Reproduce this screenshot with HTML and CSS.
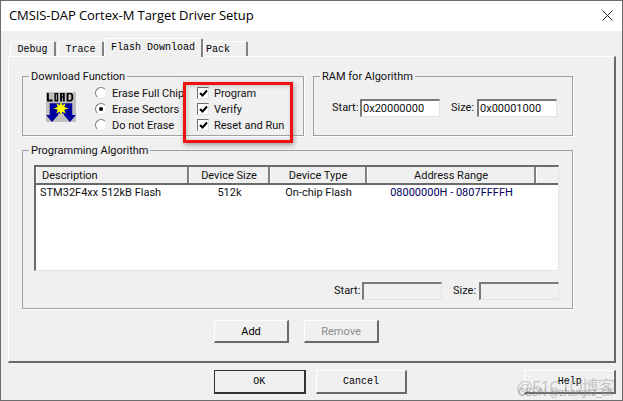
FILE: index.html
```html
<!DOCTYPE html>
<html lang="en">
<head>
  <meta charset="UTF-8">
  <title>CMSIS-DAP Cortex-M Target Driver Setup</title>
  <link rel="stylesheet" href="styles.css">
</head>
<body>
  <div class="window">
    <div class="titlebar">
      <span class="title-text">CMSIS-DAP Cortex-M Target Driver Setup</span>
      <svg class="close-icon" width="11" height="11" viewBox="0 0 11 11"><path d="M0.5 0.5L10.5 10.5M10.5 0.5L0.5 10.5" stroke="#222" fill="none"/></svg>
    </div>

    <div class="client">
      <div class="tabs">
        <div class="tab tab-debug">Debug</div>
        <div class="tab tab-trace">Trace</div>
        <div class="tab tab-active">Flash Download</div>
        <div class="tab tab-pack">Pack</div>
      </div>

      <div class="panel">
        <div class="top-row">
          <fieldset class="group group-download">
            <legend>Download Function</legend>
            <div class="download-body">
              <svg class="load-icon" width="30" height="30" viewBox="0 0 32 32">
                <rect x="0" y="0" width="32" height="32" fill="#c0c0c0"/>
                <path d="M1 10V1H3V8H7V10ZM9 1H13V10H9ZM10.500 2.500V8.500H11.500V2.500ZM15 10V1H20V10H18V6H17V10ZM17 2.500V4.500H18V2.500ZM22 1H27L29 3V8L27 10H22ZM24 2.500V8.500H26L27 7.500V3.500L26 2.500Z" fill="#000" fill-rule="evenodd"/>
                <path d="M13 12H19V23H13Z" fill="#0000a0"/>
                <path d="M4 12H13V24.500L6.500 32L0 24.500H4ZM19 12H28V24.500H32L25.500 32L19 24.500Z" fill="#0000a0"/>
                <path d="M16 10L17.500 14L21 12L19.500 16L24 17.500L19.500 19L21 23L17.500 21L16 25L14.500 21L11 23L12.500 19L8 17.500L12.500 16L11 12L14.500 14Z" fill="#ffff00"/>
              </svg>
              <div class="radios">
                <label class="opt"><span class="radio"></span>Erase Full Chip</label>
                <label class="opt"><span class="radio radio-on"></span>Erase Sectors</label>
                <label class="opt"><span class="radio"></span>Do not Erase</label>
              </div>
              <div class="checks">
                <label class="opt"><span class="check"><svg width="9" height="9" viewBox="0 0 9 9"><path d="M1 4L3.500 6.500L8 1.500" stroke="#000" stroke-width="2" fill="none"/></svg></span>Program</label>
                <label class="opt"><span class="check"><svg width="9" height="9" viewBox="0 0 9 9"><path d="M1 4L3.500 6.500L8 1.500" stroke="#000" stroke-width="2" fill="none"/></svg></span>Verify</label>
                <label class="opt"><span class="check"><svg width="9" height="9" viewBox="0 0 9 9"><path d="M1 4L3.500 6.500L8 1.500" stroke="#000" stroke-width="2" fill="none"/></svg></span>Reset and Run</label>
              </div>
            </div>
          </fieldset>

          <fieldset class="group group-ram">
            <legend>RAM for Algorithm</legend>
            <div class="ram-fields">
              <span class="field-label">Start:</span>
              <span class="input">0x20000000</span>
              <span class="field-label label-size">Size:</span>
              <span class="input">0x00001000</span>
            </div>
          </fieldset>
        </div>

        <fieldset class="group group-algo">
          <legend>Programming Algorithm</legend>
          <div class="list">
            <div class="list-head">
              <div class="col col-desc head-left">Description</div>
              <div class="col col-size">Device Size</div>
              <div class="col col-type">Device Type</div>
              <div class="col col-addr">Address Range</div>
              <div class="col col-rest"></div>
            </div>
            <div class="list-row">
              <div class="cell col-desc">STM32F4xx 512kB Flash</div>
              <div class="cell col-size">512k</div>
              <div class="cell col-type">On-chip Flash</div>
              <div class="cell col-addr addr-text">08000000H - 0807FFFFH</div>
            </div>
          </div>
          <div class="algo-fields">
            <span class="field-label">Start:</span>
            <span class="input input-off"></span>
            <span class="field-label label-size">Size:</span>
            <span class="input input-off"></span>
          </div>
        </fieldset>

        <div class="algo-buttons">
          <button class="btn btn-small">Add</button>
          <button class="btn btn-small btn-off">Remove</button>
        </div>
      </div>

      <div class="footer">
        <button class="btn btn-main btn-default">OK</button>
        <button class="btn btn-main">Cancel</button>
        <button class="btn btn-main btn-help">Help</button>
      </div>
    </div>

    <!-- red annotation on the screenshot -->
    <div class="highlight"></div>
    <div class="wm-big">@51CTO博客</div>
    <div class="wm-small">CSDN @zhangsz_sh</div>
  </div>
</body>
</html>
```

FILE: styles.css
```css
* {
  box-sizing: border-box;
}
html, body {
  margin: 0;
  padding: 0;
  overflow: hidden;
}
body {
  width: 623px;
  height: 401px;
  font-family: Roboto, "Liberation Sans", sans-serif;
  font-size: 11px;
  color: #111;
}
.window {
  position: relative;
  width: 623px;
  height: 401px;
  border: 1px solid #6d6d6d;
  overflow: hidden;
  background: #f0f0f0;
}

/* title bar */
.titlebar {
  height: 30px;
  background: #fff;
  display: flex;
  align-items: center;
  justify-content: space-between;
  padding: 0 9px 2px 8px;
}
.title-text {
  font-family: "Open Sans", sans-serif;
  font-size: 13px;
  letter-spacing: -0.08px;
  color: #000;
}

/* tabs */
.client {
  padding: 6px 6px 0 7px;
}
.tabs {
  display: flex;
  align-items: flex-end;
  height: 19px;
  padding-left: 2px;
}
.tab {
  font-family: "Liberation Mono", monospace;
  font-size: 10px;
  height: 15px;
  line-height: 15px;
  text-align: center;
  background: #f0f0f0;
  border-top: 1px solid #fff;
  border-left: 1px solid #fff;
  border-right: 2px solid #808080;
  border-radius: 2px 2px 0 0;
  color: #000;
}
.tab-debug {
  width: 46px;
  margin-right: 2px;
}
.tab-trace {
  width: 46px;
}
.tab-active {
  width: 99px;
  height: 19px;
  line-height: 17px;
  margin-bottom: -1px;
  position: relative;
  z-index: 1;
}
.tab-pack {
  width: 45px;
  padding-right: 14px;
}

/* main panel */
.panel {
  height: 307px;
  border: 1px solid;
  border-color: #fff #696969 #696969 #fff;
  border-right-width: 2px;
  border-bottom-width: 2px;
  padding: 13px 0 0 13px;
}
.top-row {
  display: flex;
  gap: 9px;
}
.group {
  margin: 0;
  padding: 0;
  border: 1px solid #a0a0a0;
  box-shadow: 1px 1px 0 #fff;
  min-width: 0;
}
.group legend {
  margin-left: 6px;
  padding: 0 2px;
  font-size: 11px;
  line-height: 13px;
}
.group-download {
  width: 282px;
  height: 66px;
}
.download-body {
  display: flex;
  align-items: flex-start;
  padding-top: 2px;
}
.load-icon {
  margin: 7px 0 0 23px;
  flex: none;
}
.radios {
  margin-left: 19px;
  width: 102px;
  flex: none;
}
.checks {
  flex: none;
}
.opt {
  display: flex;
  align-items: center;
  height: 16px;
  white-space: nowrap;
}
.radio {
  width: 12px;
  height: 12px;
  border-radius: 50%;
  background: #fff;
  border: 1px solid;
  border-color: #7d7d7d #e6e6e6 #e6e6e6 #7d7d7d;
  margin-right: 5px;
  flex: none;
  position: relative;
}
.radio-on::after {
  content: "";
  position: absolute;
  left: 3px;
  top: 3px;
  width: 4px;
  height: 4px;
  border-radius: 50%;
  background: #000;
}
.check {
  width: 12px;
  height: 12px;
  background: #fff;
  border: 1px solid;
  border-color: #6d6d6d #e4e4e4 #e4e4e4 #6d6d6d;
  margin-right: 5px;
  flex: none;
  display: flex;
  align-items: center;
  justify-content: center;
}
.group-ram {
  width: 260px;
  height: 66px;
}
.ram-fields {
  display: flex;
  padding: 16px 0 0 18px;
}
.field-label {
  width: 24px;
  line-height: 18px;
  margin-right: 4px;
  white-space: nowrap;
}
.label-size {
  width: 22px;
  margin-left: 11px;
}
.input {
  display: block;
  width: 80px;
  height: 18px;
  background: #fff;
  border: 1px solid;
  border-color: #7a7a7a #e3e3e3 #e3e3e3 #7a7a7a;
  border-width: 2px 1px 1px 2px;
  line-height: 15px;
  padding-left: 1px;
}
.input-off {
  background: #f0f0f0;
}

/* programming algorithm */
.group-algo {
  margin-top: 8px;
  width: 551px;
  height: 165px;
  padding-top: 8px;
}
.list {
  width: 525px;
  height: 106px;
  margin-left: 11px;
  background: #fff;
  border: 1px solid;
  border-color: #696969 #e4e4e4 #e4e4e4 #696969;
  border-width: 2px 1px 1px 2px;
}
.list-head {
  display: flex;
  height: 18px;
  background: #f0f0f0;
  border-bottom: 2px solid #696969;
}
.col {
  border-right: 2px solid #808080;
  border-left: 1px solid #fff;
  text-align: center;
  line-height: 17px;
}
.head-left {
  text-align: left;
  padding-left: 5px;
}
.col-desc { width: 153px; }
.col-size { width: 81px; text-align: center; }
.col-type { width: 97px; text-align: center; }
.col-addr { width: 169px; text-align: center; }
.col-rest { width: 22px; border-right: none; }
.list-row {
  display: flex;
  line-height: 15px;
}
.cell:first-child {
  padding-left: 4px;
}
.addr-text {
  color: #000060;
}
.algo-fields {
  display: flex;
  justify-content: flex-end;
  width: 525px;
  margin: 11px 0 0 11px;
}
.algo-buttons {
  display: flex;
  gap: 15px;
  margin: 11px 0 0 192px;
}

/* buttons */
.btn {
  font-family: Roboto, "Liberation Sans", sans-serif;
  font-size: 11px;
  padding: 0;
  background: #f0f0f0;
  color: #000;
  border: 1px solid;
  border-color: #fff #696969 #696969 #fff;
  border-right-width: 2px;
  border-bottom-width: 2px;
}
.btn-small {
  width: 75px;
  height: 23px;
}
.btn-off {
  color: #8c8c8c;
}
.footer {
  display: flex;
  margin: 7px 0 0 206px;
}
.btn-main {
  width: 92px;
  height: 24px;
  font-family: "Liberation Mono", monospace;
  font-size: 10px;
  margin-right: 10px;
}
.btn-default {
  border: 1px solid #333;
  border-right-width: 2px;
  border-bottom-width: 2px;
}
.btn-help {
  margin: 0 0 0 107px;
}

/* overlays */
.highlight {
  position: absolute;
  left: 182px;
  top: 81px;
  width: 110px;
  height: 61px;
  border: 3px solid #ee1111;
  box-shadow: 1px 2px 5px rgba(0, 0, 0, 0.35), inset 1px 1px 4px rgba(0, 0, 0, 0.2);
}
.wm-big {
  position: absolute;
  left: 515px;
  top: 372px;
  font-size: 17px;
  letter-spacing: -1px;
  white-space: nowrap;
  color: rgba(150, 150, 150, 0.45);
  font-family: "Liberation Sans", "Noto Sans CJK SC", sans-serif;
}
.wm-small {
  position: absolute;
  left: 517px;
  top: 386px;
  font-size: 10px;
  white-space: nowrap;
  color: rgba(120, 120, 120, 0.55);
  font-family: "Liberation Sans", sans-serif;
}
```
